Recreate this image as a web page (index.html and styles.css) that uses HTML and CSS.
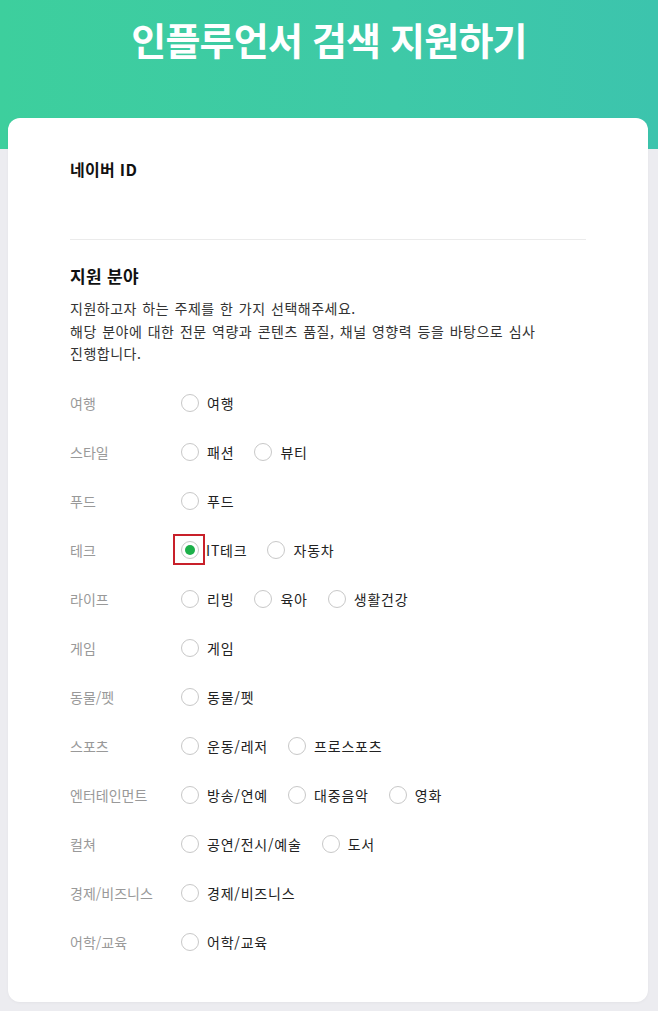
FILE: index.html
```html
<!DOCTYPE html>
<html lang="ko">
<head>
<meta charset="utf-8">
<title>인플루언서 검색 지원하기</title>
<link rel="stylesheet" href="styles.css">
</head>
<body>
<header class="hero">
  <h1 class="hero-title">인플루언서 검색 지원하기</h1>
</header>
<main class="card">
  <section class="field">
    <h2 class="field-title">네이버 ID</h2>
    <div class="field-value"></div>
  </section>
  <hr class="divider">
  <section class="field">
    <h2 class="field-title">지원 분야</h2>
    <p class="desc">지원하고자 하는 주제를 한 가지 선택해주세요.<br>해당 분야에 대한 전문 역량과 콘텐츠 품질, 채널 영향력 등을 바탕으로 심사<br>진행합니다.</p>
    <div class="rows">
      <div class="row"><span class="row-label">여행</span><div class="opts"><label class="opt"><span class="radio"></span>여행</label></div></div>
      <div class="row"><span class="row-label">스타일</span><div class="opts"><label class="opt"><span class="radio"></span>패션</label><label class="opt"><span class="radio"></span>뷰티</label></div></div>
      <div class="row"><span class="row-label">푸드</span><div class="opts"><label class="opt"><span class="radio"></span>푸드</label></div></div>
      <div class="row"><span class="row-label">테크</span><div class="opts"><label class="opt opt-tight"><span class="radio checked"><span class="highlight"></span></span>IT테크</label><label class="opt"><span class="radio"></span>자동차</label></div></div>
      <div class="row"><span class="row-label">라이프</span><div class="opts"><label class="opt"><span class="radio"></span>리빙</label><label class="opt"><span class="radio"></span>육아</label><label class="opt"><span class="radio"></span>생활건강</label></div></div>
      <div class="row"><span class="row-label">게임</span><div class="opts"><label class="opt"><span class="radio"></span>게임</label></div></div>
      <div class="row"><span class="row-label">동물/펫</span><div class="opts"><label class="opt"><span class="radio"></span>동물/펫</label></div></div>
      <div class="row"><span class="row-label">스포츠</span><div class="opts"><label class="opt"><span class="radio"></span>운동/레저</label><label class="opt"><span class="radio"></span>프로스포츠</label></div></div>
      <div class="row"><span class="row-label">엔터테인먼트</span><div class="opts"><label class="opt"><span class="radio"></span>방송/연예</label><label class="opt"><span class="radio"></span>대중음악</label><label class="opt"><span class="radio"></span>영화</label></div></div>
      <div class="row"><span class="row-label">컬쳐</span><div class="opts"><label class="opt"><span class="radio"></span>공연/전시/예술</label><label class="opt"><span class="radio"></span>도서</label></div></div>
      <div class="row"><span class="row-label">경제/비즈니스</span><div class="opts"><label class="opt"><span class="radio"></span>경제/비즈니스</label></div></div>
      <div class="row"><span class="row-label">어학/교육</span><div class="opts"><label class="opt"><span class="radio"></span>어학/교육</label></div></div>
    </div>
  </section>
</main>
</body>
</html>
```
FILE: styles.css
```css
* { box-sizing: border-box; }
html, body { margin: 0; padding: 0; }
body {
  background: #ececf0;
  font-family: "Noto Sans CJK KR", "Noto Sans", sans-serif;
  color: #222;
  min-height: 1011px;
}
.hero {
  height: 149px;
  background: linear-gradient(90deg, #3dcf9d 0%, #3ec9a7 60%, #3cc4ad 100%);
  padding-top: 12px;
}
.hero-title {
  margin: 0;
  text-align: center;
  color: #fff;
  font-size: 38px;
  line-height: 54px;
  font-weight: 700;
  letter-spacing: -0.8px;
}
.card {
  margin: -31px 10px 0 8px;
  background: #fff;
  border-radius: 12px;
  padding: 39px 62px 35px;
  box-shadow: 0 1px 3px rgba(0,0,0,0.04);
}
.field-title {
  margin: 0;
  font-size: 16px;
  line-height: 24px;
  font-weight: 700;
  color: #111;
  letter-spacing: 0.3px;
}
.field-value { height: 58px; }
.divider {
  margin: 0;
  border: 0;
  border-top: 1px solid #ebebeb;
}
.divider + .field .field-title {
  margin-top: 23px;
  font-size: 17px;
  line-height: 26px;
}
.desc {
  margin: 8px 0 14px;
  font-size: 14px;
  line-height: 22.5px;
  color: #333;
  letter-spacing: 0.5px;
  word-spacing: 1px;
}
.rows { display: flex; flex-direction: column; }
.row {
  display: flex;
  align-items: center;
  height: 49px;
}
.row-label {
  width: 111px;
  flex: none;
  font-size: 14px;
  color: #999;
}
.opts { display: flex; align-items: center; gap: 20px; }
.opt {
  display: flex;
  align-items: center;
  gap: 8px;
  font-size: 14px;
  color: #222;
  letter-spacing: 0.8px;
}
.opt-tight { gap: 7px; }
.radio {
  position: relative;
  width: 18px;
  height: 18px;
  border: 1px solid #c8c8c8;
  border-radius: 50%;
  background: #fff;
  flex: none;
}
.radio.checked::before {
  content: "";
  position: absolute;
  left: 3px;
  top: 3px;
  width: 10px;
  height: 10px;
  border-radius: 50%;
  background: #1db04a;
}
.highlight {
  position: absolute;
  left: -9px;
  top: -8px;
  width: 32px;
  height: 31px;
  border: 2px solid #c8202a;
}
```
